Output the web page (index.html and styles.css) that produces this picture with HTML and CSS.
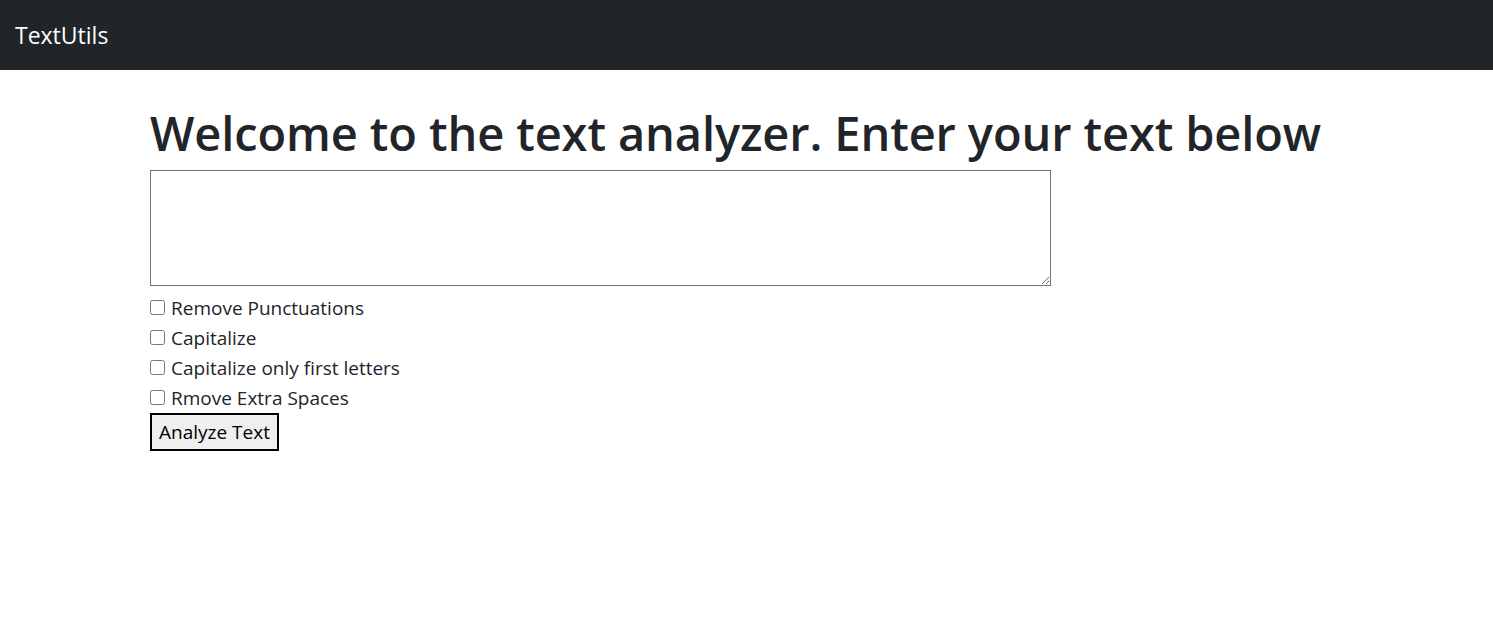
FILE: index.html
```html
<!DOCTYPE html>
<html lang="en">
<head>
<meta charset="utf-8">
<title>TextUtils</title>
<link rel="stylesheet" href="styles.css">
</head>
<body>
<nav class="navbar">
  <a class="brand" href="#">TextUtils</a>
</nav>
<main class="container">
  <h1 class="title">Welcome to the text analyzer. Enter your text below</h1>
  <form class="form">
    <textarea class="text-input" rows="5"></textarea>
    <label class="option"><input type="checkbox" class="check"> Remove Punctuations</label>
    <label class="option"><input type="checkbox" class="check"> Capitalize</label>
    <label class="option"><input type="checkbox" class="check"> Capitalize only first letters</label>
    <label class="option"><input type="checkbox" class="check"> Rmove Extra Spaces</label>
    <div><button type="button" class="btn">Analyze Text</button></div>
  </form>
</main>
</body>
</html>
```
FILE: styles.css
```css
* { box-sizing: border-box; }
html, body { margin: 0; padding: 0; }
body {
  font-family: "Open Sans", "Noto Sans", sans-serif;
  font-size: 19px;
  line-height: 30px;
  color: #212529;
  background: #fff;
}
.navbar {
  height: 70px;
  background: #212529;
  display: flex;
  align-items: center;
  padding: 0 15px;
}
.brand {
  color: #fff;
  text-decoration: none;
  font-size: 23px;
  line-height: 30px;
}
.container {
  padding: 0 150px;
}
.title {
  margin: 34px 0 8px;
  font-size: 47px;
  font-weight: 600;
  line-height: 58px;
  letter-spacing: -0.12px;
  color: #212529;
  white-space: nowrap;
}
.form {
  display: flex;
  flex-direction: column;
  align-items: flex-start;
}
.text-input {
  display: block;
  width: 901px;
  height: 116px;
  border: 1px solid #767676;
  border-radius: 0;
  margin: 0 0 7px;
  resize: both;
  font-family: inherit;
}
.option {
  display: flex;
  align-items: center;
  gap: 6px;
  height: 30px;
}
.check {
  width: 15px;
  height: 15px;
  margin: 0;
  position: relative;
  top: -1px;
}
.btn {
  height: 38px;
  padding: 0 7px;
  font-family: inherit;
  font-size: 19px;
  color: #000;
  background: #efefef;
  border: 2px solid #000;
  border-radius: 0;
}
```
